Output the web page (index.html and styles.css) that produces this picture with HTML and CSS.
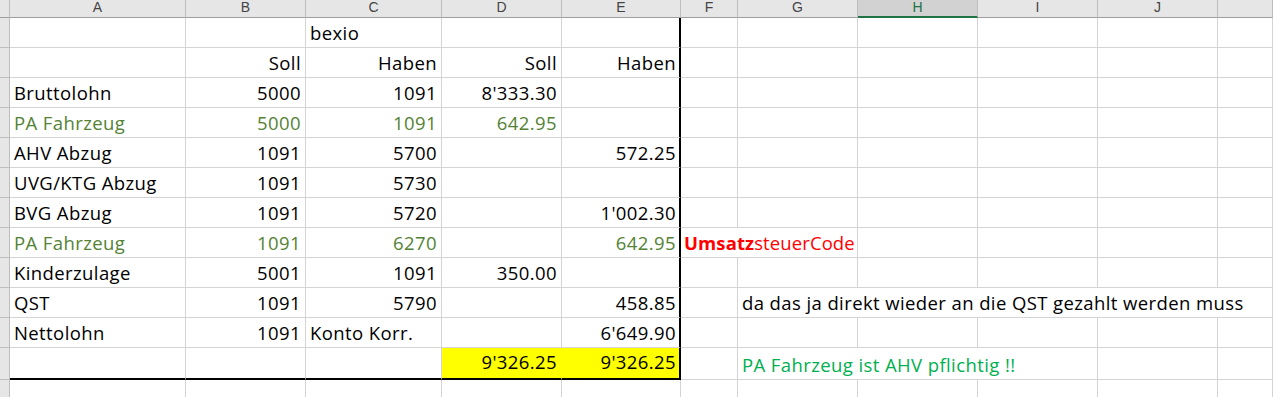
FILE: index.html
```
<!DOCTYPE html>
<html lang="de">

<head>
    <meta charset="UTF-8">
    <meta name="viewport" content="width=device-width, initial-scale=1.0">
    <title>Lohnbuchung</title>
    <link rel="stylesheet" href="styles.css">
</head>

<body>
    <div class="sheet">
        <div class="row head">
            <div class="rh"></div>
            <div class="hd">A</div>
            <div class="hd">B</div>
            <div class="hd">C</div>
            <div class="hd">D</div>
            <div class="hd">E</div>
            <div class="hd">F</div>
            <div class="hd">G</div>
            <div class="hd active">H</div>
            <div class="hd">I</div>
            <div class="hd">J</div>
            <div class="hd"></div>
        </div>

        <div class="row">
            <div class="rh"></div>
            <div class="c"></div>
            <div class="c"></div>
            <div class="c">bexio</div>
            <div class="c"></div>
            <div class="c edge"></div>
            <div class="c"></div>
            <div class="c"></div>
            <div class="c"></div>
            <div class="c"></div>
            <div class="c"></div>
            <div class="c"></div>
        </div>

        <div class="row">
            <div class="rh"></div>
            <div class="c"></div>
            <div class="c r">Soll</div>
            <div class="c r">Haben</div>
            <div class="c r">Soll</div>
            <div class="c r edge">Haben</div>
            <div class="c"></div>
            <div class="c"></div>
            <div class="c"></div>
            <div class="c"></div>
            <div class="c"></div>
            <div class="c"></div>
        </div>

        <div class="row">
            <div class="rh"></div>
            <div class="c">Bruttolohn</div>
            <div class="c r">5000</div>
            <div class="c r">1091</div>
            <div class="c r">8'333.30</div>
            <div class="c r edge"></div>
            <div class="c"></div>
            <div class="c"></div>
            <div class="c"></div>
            <div class="c"></div>
            <div class="c"></div>
            <div class="c"></div>
        </div>

        <div class="row olive">
            <div class="rh"></div>
            <div class="c">PA Fahrzeug</div>
            <div class="c r">5000</div>
            <div class="c r">1091</div>
            <div class="c r">642.95</div>
            <div class="c r edge"></div>
            <div class="c"></div>
            <div class="c"></div>
            <div class="c"></div>
            <div class="c"></div>
            <div class="c"></div>
            <div class="c"></div>
        </div>

        <div class="row">
            <div class="rh"></div>
            <div class="c">AHV Abzug</div>
            <div class="c r">1091</div>
            <div class="c r">5700</div>
            <div class="c r"></div>
            <div class="c r edge">572.25</div>
            <div class="c"></div>
            <div class="c"></div>
            <div class="c"></div>
            <div class="c"></div>
            <div class="c"></div>
            <div class="c"></div>
        </div>

        <div class="row">
            <div class="rh"></div>
            <div class="c">UVG/KTG Abzug</div>
            <div class="c r">1091</div>
            <div class="c r">5730</div>
            <div class="c r"></div>
            <div class="c r edge"></div>
            <div class="c"></div>
            <div class="c"></div>
            <div class="c"></div>
            <div class="c"></div>
            <div class="c"></div>
            <div class="c"></div>
        </div>

        <div class="row">
            <div class="rh"></div>
            <div class="c">BVG Abzug</div>
            <div class="c r">1091</div>
            <div class="c r">5720</div>
            <div class="c r"></div>
            <div class="c r edge">1'002.30</div>
            <div class="c"></div>
            <div class="c"></div>
            <div class="c"></div>
            <div class="c"></div>
            <div class="c"></div>
            <div class="c"></div>
        </div>

        <div class="row olive">
            <div class="rh"></div>
            <div class="c">PA Fahrzeug</div>
            <div class="c r">1091</div>
            <div class="c r">6270</div>
            <div class="c r"></div>
            <div class="c r edge">642.95</div>
            <div class="c note red span2"><b>Umsatz</b>steuerCode</div>
            <div class="c"></div>
            <div class="c"></div>
            <div class="c"></div>
            <div class="c"></div>
        </div>

        <div class="row">
            <div class="rh"></div>
            <div class="c">Kinderzulage</div>
            <div class="c r">5001</div>
            <div class="c r">1091</div>
            <div class="c r">350.00</div>
            <div class="c r edge"></div>
            <div class="c"></div>
            <div class="c"></div>
            <div class="c"></div>
            <div class="c"></div>
            <div class="c"></div>
            <div class="c"></div>
        </div>

        <div class="row">
            <div class="rh"></div>
            <div class="c">QST</div>
            <div class="c r">1091</div>
            <div class="c r">5790</div>
            <div class="c r"></div>
            <div class="c r edge">458.85</div>
            <div class="c"></div>
            <div class="c span5">da das ja direkt wieder an die QST gezahlt werden muss</div>
        </div>

        <div class="row">
            <div class="rh"></div>
            <div class="c">Nettolohn</div>
            <div class="c r">1091</div>
            <div class="c">Konto Korr.</div>
            <div class="c r"></div>
            <div class="c r edge">6'649.90</div>
            <div class="c"></div>
            <div class="c"></div>
            <div class="c"></div>
            <div class="c"></div>
            <div class="c"></div>
            <div class="c"></div>
        </div>

        <div class="row total">
            <div class="rh"></div>
            <div class="c foot"></div>
            <div class="c foot"></div>
            <div class="c foot"></div>
            <div class="c r foot sum">9'326.25</div>
            <div class="c r foot sum edge">9'326.25</div>
            <div class="c"></div>
            <div class="c green span3">PA Fahrzeug ist AHV pflichtig !!</div>
            <div class="c"></div>
            <div class="c"></div>
        </div>

        <div class="row">
            <div class="rh"></div>
            <div class="c"></div>
            <div class="c"></div>
            <div class="c"></div>
            <div class="c"></div>
            <div class="c"></div>
            <div class="c"></div>
            <div class="c"></div>
            <div class="c"></div>
            <div class="c"></div>
            <div class="c"></div>
            <div class="c"></div>
        </div>
    </div>
</body>

</html>
```

FILE: styles.css
```
* {
    margin: 0;
    padding: 0;
    box-sizing: border-box;
}

body {
    background-color: #FFF;
    font-family: "Open Sans", "Noto Sans", sans-serif;
    overflow: hidden;
}

.sheet {
    width: 1273px;
}

.row {
    display: grid;
    grid-template-columns: 10px 176px 120px 136px 120px 119px 57px 120px 120px 120px 120px 1fr;
    height: 30px;
}

.row.head {
    height: 18px;
}

.row.total {
    height: 32px;
}

/* column letters */
.hd {
    display: flex;
    justify-content: center;
    align-items: flex-start;
    background-color: #E6E6E6;
    border-right: 1px solid #BDBDBD;
    border-bottom: 1px solid #9E9E9E;
    color: #444;
    font-family: "Liberation Sans", Arial, sans-serif;
    font-size: 14px;
    line-height: 15px;
    overflow: hidden;
}

.hd.active {
    background-color: #D2D2D2;
    color: #217346;
    border-bottom: 2px solid #217346;
}

/* row number gutter */
.rh {
    background-color: #E6E6E6;
    border-right: 1px solid #BDBDBD;
    border-bottom: 1px solid #BDBDBD;
}

.head .rh {
    border-bottom: 1px solid #9E9E9E;
}

.c {
    display: flex;
    align-items: flex-end;
    border-right: 1px solid #D4D4D4;
    border-bottom: 1px solid #D4D4D4;
    padding: 0 4px 4px;
    font-size: 18.5px;
    line-height: 20px;
    letter-spacing: 0.4px;
    color: #000;
    white-space: nowrap;
    overflow: hidden;
}

.c.r {
    justify-content: flex-end;
}

.c.edge {
    border-right: 2px solid #000;
    padding-right: 3px;
}

.c.foot {
    border-bottom: 2px solid #000;
    padding-bottom: 6px;
}

.c.sum {
    background-color: #FF0;
    border-right-color: #FF0;
}

.c.sum.edge {
    border-right-color: #000;
}

.olive .c {
    color: #548235;
}

.c.note {
    letter-spacing: 0.1px;
    padding-left: 3px;
}

.c.red {
    color: #F00;
}

.c.red b {
    font-weight: bold;
}

.c.green {
    color: #00B050;
}

.span2 {
    grid-column: span 2;
}

.span3 {
    grid-column: span 3;
}

.span5 {
    grid-column: span 5;
}
```
